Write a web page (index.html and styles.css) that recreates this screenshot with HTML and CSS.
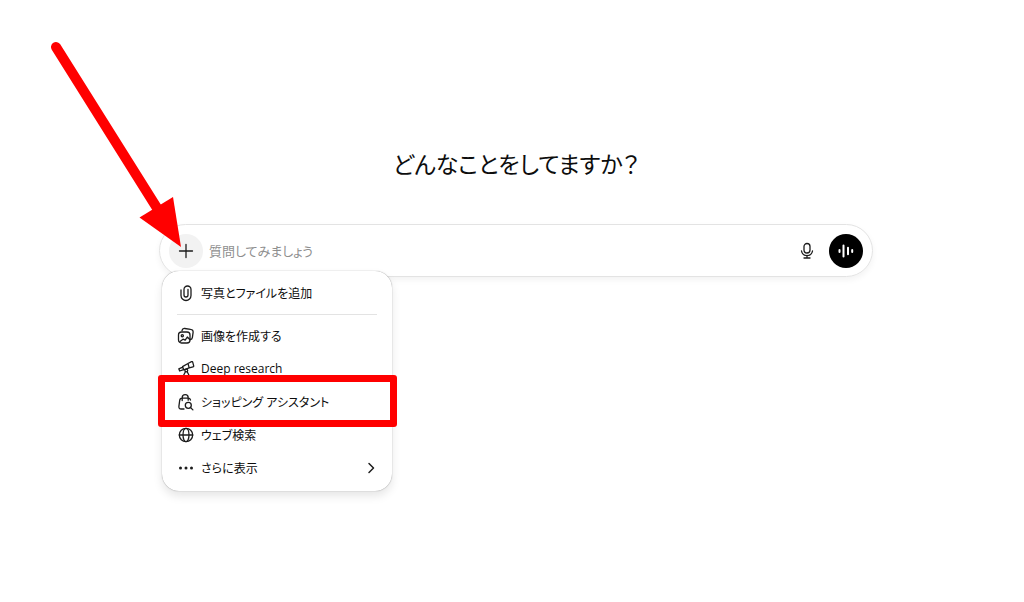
FILE: index.html
```
<!DOCTYPE html>
<html lang="ja">
<head>
    <meta charset="UTF-8">
    <title>どんなことをしてますか？</title>
    <meta name="viewport" content="width=device-width, initial-scale=1.0">
    <link rel="stylesheet" href="styles.css">
</head>
<body>

<main class="chat">
    <h1>どんなことをしてますか？</h1>

    <div class="composer-wrap">
        <form class="composer">
            <button type="button" class="plus-btn" aria-label="追加" aria-expanded="true">
                <svg width="16" height="16" viewBox="0 0 16 16"><path d="M8 1.5v13M1.5 8h13"/></svg>
            </button>
            <input type="text" aria-label="質問" placeholder="質問してみましょう">
            <button type="button" class="mic-btn" aria-label="音声入力">
                <svg width="16" height="18" viewBox="0 0 16 18"><rect x="5" y="1.5" width="6" height="9.5" rx="3"/><path d="M2.5 9a5.6 5.6 0 0 0 11 0M8 13.5v2.500M5 16h6"/></svg>
            </button>
            <button type="button" class="voice-btn" aria-label="音声モード">
                <svg width="18" height="18" viewBox="0 0 18 18"><path d="M2.500 8v2M6.500 3.500v11M11 5.800v6.400M15.200 8v2"/></svg>
            </button>
        </form>

        <div class="menu">
            <button type="button" class="menu-item">
                <svg width="18" height="18" viewBox="0 0 18 18"><path d="M4 6v5.500a5 5 0 0 0 10 0V5.500a3.500 3.500 0 0 0-7 0V11a2 2 0 0 0 4 0V5.500"/></svg>
                <span>写真とファイルを追加</span>
            </button>
            <hr>
            <button type="button" class="menu-item">
                <svg width="18" height="18" viewBox="0 0 18 18"><path d="M5 3.500c.3-1.500 1.300-2.200 2.800-2l5.800.8c1.800.2 2.700 1.300 2.500 3l-.7 5c-.2 1.300-.8 2-2 2.200"/><rect x="1.500" y="5" width="11.500" height="11" rx="3"/><circle cx="5.300" cy="8.700" r="1.100"/><path d="M3 14.500l3-2.300 2.200 1L10.300 10l2.500 2.500"/></svg>
                <span>画像を作成する</span>
            </button>
            <button type="button" class="menu-item">
                <svg width="18" height="18" viewBox="0 0 18 18"><path d="M11 3.500l3.500-1.800c.6-.3 1 0 1.200.5l1 3.600c.1.600-.1 1-.7 1.100l-3.800 1zM11 3.500L5.500 6.600l1.200 3.200 5.500-1.900M5.700 7.200L1.800 8.800l.9 2.200 3.900-1.300"/><circle cx="9.300" cy="10.500" r="1.400"/><path d="M8.400 11.800L6 16.500M10.200 11.800l2.400 4.700"/></svg>
                <span>Deep research</span>
            </button>
            <button type="button" class="menu-item highlighted">
                <svg width="18" height="18" viewBox="0 0 18 18"><path d="M7 16H4.200c-1.700 0-2.500-1-2.300-2.600l.8-6C2.900 6 3.700 5.200 5 5.200h6.200c1.300 0 2 .7 2.300 1.800M5.200 7.500V4.700a3 3 0 0 1 6 0v2.500"/><circle cx="11.300" cy="12.300" r="3"/><path d="M13.500 14.500l2.400 2.400"/></svg>
                <span>ショッピング アシスタント</span>
            </button>
            <button type="button" class="menu-item">
                <svg width="18" height="18" viewBox="0 0 18 18"><circle cx="9" cy="9" r="6.700"/><ellipse cx="9" cy="9" rx="3" ry="6.700"/><path d="M2.300 9h13.400"/></svg>
                <span>ウェブ検索</span>
            </button>
            <button type="button" class="menu-item">
                <svg class="dots" width="18" height="18" viewBox="0 0 18 18"><circle cx="3.500" cy="9" r="1.500"/><circle cx="9" cy="9" r="1.500"/><circle cx="14.500" cy="9" r="1.500"/></svg>
                <span>さらに表示</span>
                <svg class="chevron" width="12" height="12" viewBox="0 0 12 12"><path d="M4 1.500L8.500 6 4 10.500"/></svg>
            </button>
        </div>
    </div>
</main>

<!-- pointer to the plus button -->
<svg class="arrow" width="150" height="220" viewBox="40 35 150 220" aria-hidden="true">
    <path class="shaft" d="M56 47L157 208"/>
    <path class="head" d="M139.500 217.500L173 197l8 50z"/>
</svg>

</body>
</html>
```
FILE: styles.css
```
body {
    margin: 0;
    background: #fff;
    color: #0d0d0d;
    font-family: "Open Sans", "Noto Sans CJK JP", sans-serif;
    font-feature-settings: "palt";
}

button,
input {
    font: inherit;
    font-feature-settings: inherit;
    color: inherit;
    border: none;
    padding: 0;
}

button {
    display: flex;
    align-items: center;
    justify-content: center;
    background: none;
    cursor: pointer;
}

svg {
    flex: none;
    fill: none;
    stroke: #1c1c1c;
    stroke-width: 1.3;
    stroke-linecap: round;
    stroke-linejoin: round;
}

.chat {
    box-sizing: border-box;
    min-height: 100vh;
    padding: 144px 16px 0 24px;
}

h1 {
    margin: 0 0 40px;
    font-size: 23px;
    line-height: 40px;
    font-weight: 400;
    text-align: center;
}

.composer-wrap {
    position: relative;
    max-width: 714px;
    margin: 0 auto;
}

.composer {
    display: flex;
    align-items: center;
    box-sizing: border-box;
    height: 53px;
    padding: 0 9px;
    border: 1px solid #e3e3e3;
    border-radius: 27px;
    box-shadow: 0 3px 6px rgba(0, 0, 0, 0.05);
}

.composer input {
    flex: 1;
    min-width: 0;
    margin-left: 6px;
    font-size: 13px;
    outline: none;
    background: none;
}

.composer input::placeholder {
    color: #8f8f8f;
    opacity: 1;
}

.plus-btn,
.mic-btn,
.voice-btn {
    width: 34px;
    height: 34px;
    border-radius: 50%;
}

.plus-btn {
    background: #f2f2f2;
}

.mic-btn {
    margin-right: 5px;
}

.voice-btn {
    background: #000;
}

.voice-btn svg {
    stroke: #fff;
    stroke-width: 2;
}

.menu {
    position: absolute;
    top: 47px;
    left: 3px;
    width: 230px;
    box-sizing: border-box;
    padding: 5px 0 7px;
    background: #fff;
    border-radius: 17px;
    box-shadow: 0 0 1px rgba(0, 0, 0, 0.5), 0 5px 10px rgba(0, 0, 0, 0.1);
}

.menu hr {
    height: 1px;
    margin: 5px 15px 4px;
    border: none;
    background: #e3e3e3;
}

.menu-item {
    position: relative;
    justify-content: flex-start;
    gap: 6px;
    width: 100%;
    height: 33px;
    padding: 0 15px;
    font-size: 12px;
}

.dots {
    fill: #1c1c1c;
    stroke: none;
}

.chevron {
    margin-left: auto;
    stroke-width: 1.5;
}

.highlighted::after {
    content: "";
    position: absolute;
    inset: -10px -5px -9px -4px;
    border: 7px solid #f00;
    border-radius: 3px;
}

.arrow {
    position: absolute;
    top: 35px;
    left: 40px;
    pointer-events: none;
}

.arrow .shaft {
    stroke: #f00;
    stroke-width: 10;
}

.arrow .head {
    fill: #f00;
    stroke: none;
}
```
